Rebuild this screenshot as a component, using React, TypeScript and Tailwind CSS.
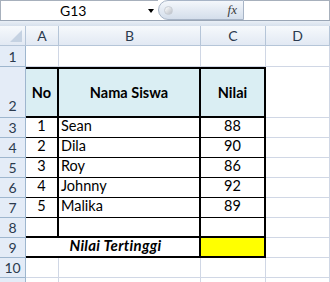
const font = { fontFamily: "Lato, 'Open Sans', sans-serif" };

const rows = [
  { n: 1, name: "Sean", nilai: 88 },
  { n: 2, name: "Dila", nilai: 90 },
  { n: 3, name: "Roy", nilai: 86 },
  { n: 4, name: "Johnny", nilai: 92 },
  { n: 5, name: "Malika", nilai: 89 },
];

function RowHead({ label, tall }: { label: string; tall?: boolean }) {
  return (
    <div
      className={`flex justify-center border-r border-b border-[#9eb6ce] bg-[#e4ecf7] text-[14px] text-[#2b3a4e] ${
        tall ? "items-end pb-[1px]" : "items-center"
      }`}
    >
      {label}
    </div>
  );
}

function ColHead({ label }: { label: string }) {
  return (
    <div className="flex items-center justify-center border-r border-b border-[#b5c5d8] bg-gradient-to-b from-[#f6f9fc] to-[#e2e9f3] text-[14px] text-[#2b3a4e]">
      {label}
    </div>
  );
}

const grid = "border-r border-b border-[#d0d7e5]";

export default function App() {
  return (
    <div className="w-[330px] h-[282px] overflow-hidden bg-white" style={font}>
      {/* Name box + formula bar */}
      <div className="flex h-[21px] border-b border-[#9aa6b6] bg-white">
        <div className="relative flex w-[158px] items-center border-t border-l border-[#a7b0bc] text-[14px] text-black">
          <span className="ml-[59px]">G13</span>
          <span className="absolute left-[147px] top-[8px] h-0 w-0 border-x-[3.5px] border-t-[4px] border-x-transparent border-t-black" />
        </div>
        <div className="flex w-[86px] items-center rounded-l-full border border-[#a7b4c6] bg-gradient-to-b from-[#f4f7fb] to-[#d4deeb]">
          <div className="ml-[5px] h-[9px] w-[9px] rounded-full border border-[#c8cdd4] bg-gradient-to-br from-white to-[#b9bec6]" />
          <span
            className="ml-auto mr-[6px] text-[13px] italic text-[#3b3b3b]"
            style={{ fontFamily: "'Liberation Serif', serif" }}
          >
            fx
          </span>
        </div>
        <div className="flex-1 border-t border-r border-[#a7b0bc] bg-white" />
      </div>
      <div className="h-[5px] bg-gradient-to-b from-[#e9eff6] to-[#d6e0ec]" />

      {/* Sheet */}
      <div className="grid grid-cols-[26px_33px_142px_65px_64px] grid-rows-[20px_21px_51px_repeat(9,20px)] text-[14.5px] text-black">
        {/* corner */}
        <div className="flex items-end justify-end border-r border-b border-[#b5c5d8] bg-gradient-to-b from-[#f6f9fc] to-[#e2e9f3] p-[3px]">
          <div className="h-0 w-0 border-t-[12px] border-r-[12px] border-t-transparent border-r-[#c5d2e2]" />
        </div>
        <ColHead label="A" />
        <ColHead label="B" />
        <ColHead label="C" />
        <ColHead label="D" />

        {/* row 1 */}
        <RowHead label="1" />
        <div className={grid} />
        <div className={grid} />
        <div className={grid} />
        <div className={grid} />

        {/* row 2 header */}
        <RowHead label="2" tall />
        <div className="flex items-center justify-center border-y-2 border-r-2 border-black bg-[#daeef3] font-bold">No</div>
        <div className="flex items-center justify-center border-y-2 border-r-2 border-black bg-[#daeef3] font-bold">Nama Siswa</div>
        <div className="flex items-center justify-center border-y-2 border-r-2 border-black bg-[#daeef3] font-bold">Nilai</div>
        <div className={grid} />

        {rows.map((r, i) => (
          <div key={r.n} className="contents">
            <RowHead label={String(i + 3)} />
            <div className="flex items-end justify-center border-r-2 border-b border-black">{r.n}</div>
            <div className="flex items-end border-r-2 border-b border-black pl-[2px]">{r.name}</div>
            <div className="flex items-end justify-center border-r-2 border-b border-black">{r.nilai}</div>
            <div className={grid} />
          </div>
        ))}

        {/* row 8 */}
        <RowHead label="8" />
        <div className="border-r-2 border-b-2 border-black" />
        <div className="border-r-2 border-b-2 border-black" />
        <div className="border-r-2 border-b-2 border-black" />
        <div className={grid} />

        {/* row 9: A9:B9 centred across */}
        <RowHead label="9" />
        <div className="col-span-2 flex items-end justify-center border-r-2 border-b-2 border-black pl-[6px] text-[15px] font-bold italic tracking-[0.3px]">
          Nilai Tertinggi
        </div>
        <div className="border-r-2 border-b-2 border-black bg-[#ffff00]" />
        <div className={grid} />

        {/* row 10 */}
        <RowHead label="10" />
        <div className={grid} />
        <div className={grid} />
        <div className={grid} />
        <div className={grid} />

        {/* row 11, only its top edge shows */}
        <RowHead label="" />
        <div className={grid} />
        <div className={grid} />
        <div className={grid} />
        <div className={grid} />
      </div>
    </div>
  );
}
